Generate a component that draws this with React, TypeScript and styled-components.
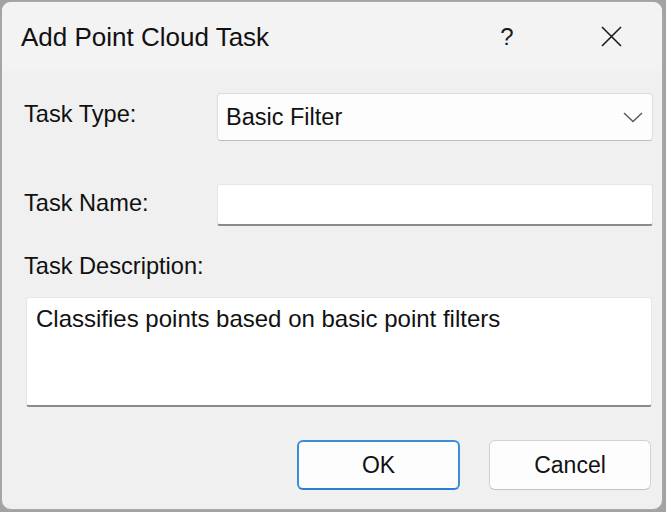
import React from "react";
import styled, { createGlobalStyle } from "styled-components";

const Global = createGlobalStyle`
  html, body {
    margin: 0;
    padding: 0;
    width: 666px;
    height: 512px;
    overflow: hidden;
    background: #a3a3a3;
  }
  body {
    font-family: "Liberation Sans", Arial, sans-serif;
    color: #1a1a1a;
  }
  * { box-sizing: border-box; }
`;

const Window = styled.div`
  margin: 1px 0 0 1px;
  width: 662px;
  height: 509px;
  border: 1px solid #a9a9a9;
  border-radius: 10px;
  overflow: hidden;
  display: flex;
  flex-direction: column;
  background: #f0f0f0;
`;

const TitleBar = styled.div`
  height: 69px;
  flex: none;
  display: flex;
  align-items: center;
  padding: 0 21px 0 19px;
  background: #f3f3f3;
`;

const Title = styled.div`
  font-family: "Liberation Sans", Arial, sans-serif;
  font-size: 26px;
  color: #111;
  flex: 1;
  margin-top: 1px;
`;

const CaptionButton = styled.div<{ $w: number }>`
  width: ${(p) => p.$w}px;
  height: 40px;
  display: flex;
  align-items: center;
  justify-content: center;
  color: #1a1a1a;
  font-family: "Liberation Sans", Arial, sans-serif;
  font-size: 24px;
`;

const Body = styled.div`
  flex: 1;
  display: flex;
  flex-direction: column;
  padding: 22px 9px 0 22px;
`;

const FieldRow = styled.div<{ $mt: number; $h: number }>`
  display: grid;
  grid-template-columns: 193px 436px;
  align-items: center;
  margin-top: ${(p) => p.$mt}px;
  height: ${(p) => p.$h}px;
`;

const Label = styled.div<{ $mt?: number; $mb?: number }>`
  font-size: 23.6px;
  line-height: 26px;
  color: #111;
  margin-top: ${(p) => p.$mt ?? 0}px;
  margin-bottom: ${(p) => p.$mb ?? 0}px;
`;

const Combo = styled.div`
  height: 100%;
  background: #fdfdfd;
  border: 1px solid #dcdcdc;
  border-bottom-color: #bdbdbd;
  border-radius: 4px;
  display: flex;
  align-items: center;
  justify-content: space-between;
  padding: 0 9px 0 8px;
  font-size: 23.5px;
  color: #111;
`;

const TextBox = styled.div`
  height: 100%;
  background: #ffffff;
  border: 1px solid #e6e6e6;
  border-bottom: 2px solid #8a8a8a;
  border-radius: 3px;
`;

const DescBox = styled.div`
  margin: 18px 0 0 2px;
  width: 626px;
  height: 110px;
  background: #ffffff;
  border: 1px solid #e6e6e6;
  border-bottom: 2px solid #8a8a8a;
  border-radius: 3px;
  padding: 7px 9px;
  font-size: 24px;
  line-height: 28px;
  color: #111;
`;

const ButtonRow = styled.div`
  display: flex;
  justify-content: flex-end;
  gap: 29px;
  margin-top: 33px;
  padding-right: 2px;
`;

const Button = styled.div<{ $primary?: boolean }>`
  width: ${(p) => (p.$primary ? 163 : 162)}px;
  height: 50px;
  display: flex;
  align-items: center;
  justify-content: center;
  background: #fdfdfd;
  border-radius: 6px;
  font-size: 23px;
  color: #111;
  border: ${(p) => (p.$primary ? "2px solid #3b8ddc" : "1px solid #d2d2d2")};
  border-bottom-color: ${(p) => (p.$primary ? "#2a7fd4" : "#c2c2c2")};
`;

const Chevron = () => (
  <svg width="20" height="11" viewBox="0 0 20 11">
    <polyline points="1,1 10,9.5 19,1" fill="none" stroke="#5c5c5c" strokeWidth="1.5" />
  </svg>
);

const CloseIcon = () => (
  <svg width="21" height="21" viewBox="0 0 21 21">
    <path d="M1 1 L20 20 M20 1 L1 20" stroke="#1a1a1a" strokeWidth="1.6" fill="none" />
  </svg>
);

export default function App() {
  return (
    <>
      <Global />
      <Window>
        <TitleBar>
          <Title>Add Point Cloud Task</Title>
          <CaptionButton $w={60}>?</CaptionButton>
          <CaptionButton $w={44} />
          <CaptionButton $w={60}>
            <CloseIcon />
          </CaptionButton>
        </TitleBar>
        <Body>
          <FieldRow $mt={0} $h={48}>
            <Label $mb={6}>Task Type:</Label>
            <Combo>
              <span>Basic Filter</span>
              <Chevron />
            </Combo>
          </FieldRow>
          <FieldRow $mt={43} $h={42}>
            <Label $mb={4}>Task Name:</Label>
            <TextBox />
          </FieldRow>
          <Label $mt={27}>Task Description:</Label>
          <DescBox>Classifies points based on basic point filters</DescBox>
          <ButtonRow>
            <Button $primary>OK</Button>
            <Button>Cancel</Button>
          </ButtonRow>
        </Body>
      </Window>
    </>
  );
}
